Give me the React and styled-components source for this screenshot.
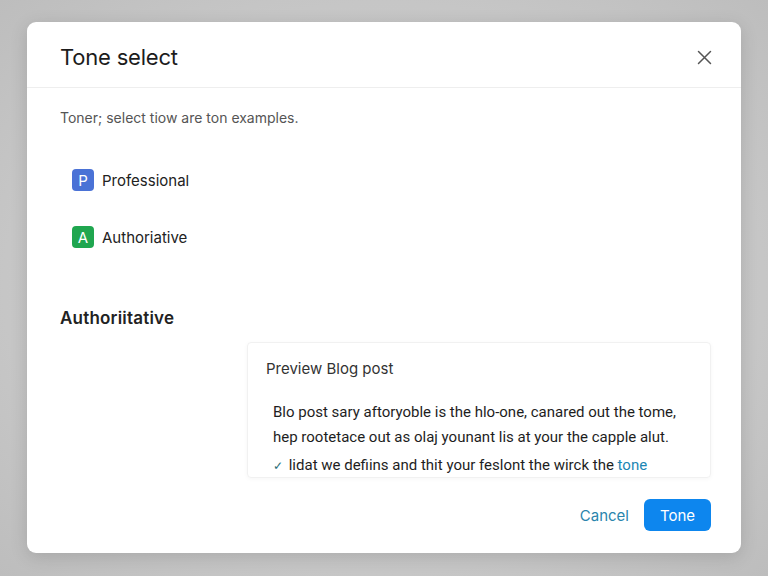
import React from "react";
import styled, { createGlobalStyle } from "styled-components";

const GlobalStyle = createGlobalStyle`
  html, body {
    margin: 0;
    padding: 0;
    background: #c9c9c9;
    font-family: Inter, "Noto Sans", "Liberation Sans", sans-serif;
  }
`;

const Page = styled.div`
  width: 768px;
  height: 576px;
  box-sizing: border-box;
  padding: 22px 27px 23px;
  background: radial-gradient(ellipse at center, #d0d0d0 0%, #c6c6c6 70%, #bdbdbd 100%);
`;

const Modal = styled.div`
  width: 714px;
  height: 531px;
  background: #fff;
  border-radius: 9px;
  box-shadow: 0 4px 18px rgba(0, 0, 0, 0.14);
  display: flex;
  flex-direction: column;
  overflow: hidden;
`;

const Header = styled.div`
  height: 66px;
  box-sizing: border-box;
  padding: 5px 28px 0 33px;
  display: flex;
  align-items: center;
  justify-content: space-between;
  border-bottom: 1px solid #eeeeee;
`;

const Title = styled.h1`
  margin: 0;
  font-size: 22px;
  font-weight: 400;
  color: #1c1c1c;
  letter-spacing: -0.2px;
`;

const CloseButton = styled.button`
  border: none;
  background: none;
  padding: 0;
  width: 18px;
  height: 18px;
  display: flex;
  align-items: center;
  justify-content: center;
  color: #555;
  cursor: pointer;
`;

const Body = styled.div`
  padding: 20px 30px 0 33px;
  display: flex;
  flex-direction: column;
`;

const Description = styled.p`
  margin: 0;
  font-size: 14px;
  line-height: 20px;
  color: #555;
`;

const OptionList = styled.div`
  margin: 41px 0 0 12px;
  display: flex;
  flex-direction: column;
  gap: 35px;
`;

const Option = styled.div`
  display: flex;
  align-items: center;
  gap: 8px;
  height: 22px;
  font-size: 15px;
  color: #222;
`;

const Badge = styled.span`
  width: 22px;
  height: 22px;
  border-radius: 4px;
  background: ${(p) => p.color};
  color: #fff;
  font-size: 15px;
  display: flex;
  align-items: center;
  justify-content: center;
`;

const SectionHeading = styled.h2`
  margin: 58px 0 0;
  font-size: 17px;
  line-height: 24px;
  font-weight: 600;
  color: #222;
  letter-spacing: 0.2px;
`;

const PreviewCard = styled.div`
  margin: 12px 0 0 187px;
  height: 136px;
  box-sizing: border-box;
  padding: 16px 18px 0;
  border: 1px solid #f1f1f1;
  border-radius: 4px;
  box-shadow: 0 1px 4px rgba(0, 0, 0, 0.04);
  overflow: hidden;
`;

const PreviewTitle = styled.div`
  font-size: 15px;
  line-height: 20px;
  color: #333;
`;

const PreviewText = styled.div`
  margin: 21px 0 0 7px;
  font-family: Roboto, "Liberation Sans", sans-serif;
  font-size: 15px;
  line-height: 25px;
  color: #1e1e1e;
  white-space: nowrap;
`;

const CheckLine = styled.div`
  margin-top: 3px;
`;

const Check = styled.span`
  font-size: 12px;
  color: #2a6f78;
  margin-right: 2px;
`;

const Highlight = styled.span`
  color: #1b86b4;
`;

const Footer = styled.div`
  margin-top: auto;
  display: flex;
  justify-content: flex-end;
  align-items: center;
  gap: 15px;
  padding: 0 30px 22px;
`;

const CancelButton = styled.button`
  border: none;
  background: none;
  font-family: inherit;
  font-size: 15px;
  color: #2a85ad;
  padding: 0;
  cursor: pointer;
`;

const PrimaryButton = styled.button`
  width: 67px;
  height: 32px;
  border: none;
  border-radius: 6px;
  background: #0d86ee;
  color: #fff;
  font-family: inherit;
  font-size: 15px;
  cursor: pointer;
`;

export default function App() {
  return (
    <>
      <GlobalStyle />
      <Page>
        <Modal>
          <Header>
            <Title>Tone select</Title>
            <CloseButton aria-label="Close">
              <svg width="15" height="15" viewBox="0 0 15 15" fill="none" stroke="currentColor" strokeWidth="1.5" strokeLinecap="round">
                <path d="M1.5 1.5l12 12M13.5 1.5l-12 12" />
              </svg>
            </CloseButton>
          </Header>
          <Body>
            <Description>Toner; select tiow are ton examples.</Description>
            <OptionList>
              <Option>
                <Badge color="#4a72d6">P</Badge>
                Professional
              </Option>
              <Option>
                <Badge color="#1fa64f">A</Badge>
                Authoriative
              </Option>
            </OptionList>
            <SectionHeading>Authoriitative</SectionHeading>
            <PreviewCard>
              <PreviewTitle>Preview Blog post</PreviewTitle>
              <PreviewText>
                <div>Blo post sary aftoryoble is the hlo-one, canared out the tome,</div>
                <div>hep rootetace out as olaj younant lis at your the capple alut.</div>
                <CheckLine>
                  <Check>✓</Check> lidat we defiins and thit your feslont the wirck the <Highlight>tone</Highlight>
                </CheckLine>
              </PreviewText>
            </PreviewCard>
          </Body>
          <Footer>
            <CancelButton>Cancel</CancelButton>
            <PrimaryButton>Tone</PrimaryButton>
          </Footer>
        </Modal>
      </Page>
    </>
  );
}
